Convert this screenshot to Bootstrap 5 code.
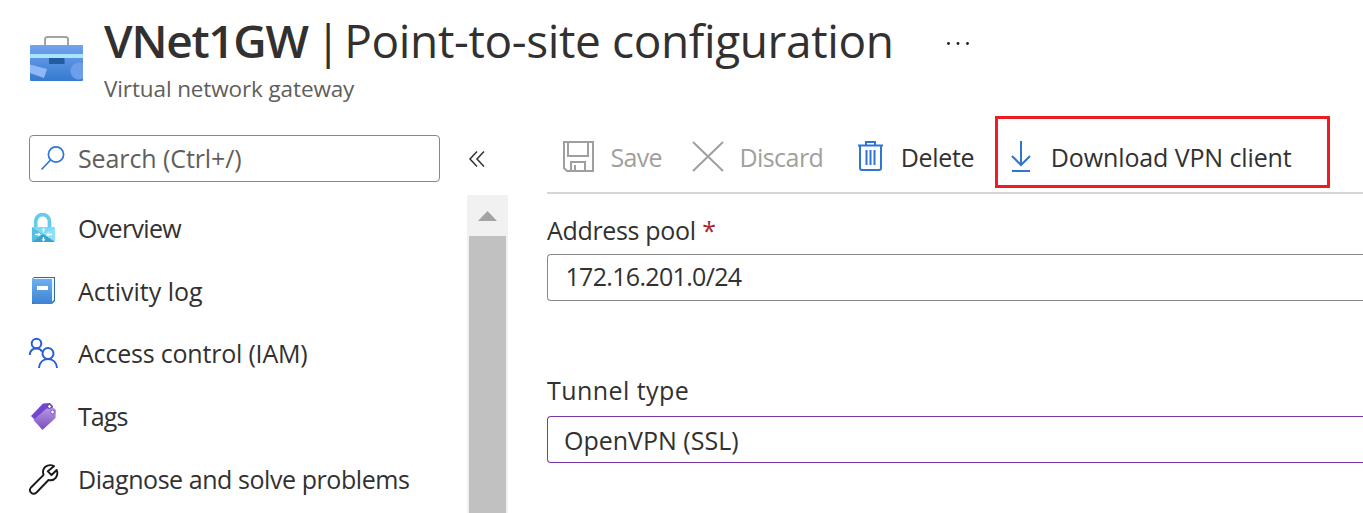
<!DOCTYPE html>
<html lang="en">
<head>
<meta charset="utf-8">
<meta name="viewport" content="width=device-width, initial-scale=1">
<title>VNet1GW | Point-to-site configuration</title>
<link href="https://cdn.jsdelivr.net/npm/bootstrap@5.3.0/dist/css/bootstrap.min.css" rel="stylesheet">
<style>
body{font-family:"Open Sans","Noto Sans",sans-serif;font-size:25px;line-height:34px;color:#323130;background:#fff;height:513px;overflow:hidden;white-space:nowrap}
svg{display:block;flex:none}
.page-head{height:116px;padding:0 29px}
.gateway-icon{margin-top:35px;margin-right:20px}
.page-title{font-size:46px;line-height:60px;margin:10px 0 0;font-weight:400;color:#323130;letter-spacing:-.37px}
.page-title b{font-weight:600;letter-spacing:-1.27px}
.title-bar{letter-spacing:-4.2px}
.title-more{margin:37px 0 0 52px}
.page-sub{font-size:22.5px;line-height:30px;margin-top:4px;color:#605e5c;letter-spacing:-.12px}
.side{width:411px;margin-left:29px;padding-top:19px}
.search-box{height:47px;border:1px solid #8a8886;border-radius:4px;color:#605e5c;letter-spacing:-.1px}
.search-box span{margin-bottom:2px}
.side-list{padding-top:14.5px}
.side-item{height:62.7px}
.item-icon{width:28px;margin-right:21px}
.rail{width:41px;margin-left:27px}
.rail-top{height:79px}
.scroll-track{background:#f1f1f1;width:41px}
.scroll-thumb{background:#c1c1c1;width:37px;margin-left:2px}
.content-pane{margin-left:39px}
.toolbar{height:78px;border-bottom:2px solid #d6d6d6}
.cmd{height:84px}
.cmd span,.boxed-cmd span{margin-bottom:2px}
.cmd-off{color:#a19f9d}
.boxed-cmd{width:335px;height:72px;border:3px solid #ed1c24;margin-left:21px;padding-top:12px}
.field-label{height:34px}
.pool-label{margin-top:19px}
.tunnel-label{margin-top:72px}
.field-box{height:47px;border:1px solid #8a8886;border-right:0;border-radius:4px 0 0 4px}
.pool-box{margin-top:7px;padding:0 0 4px 17.5px}
.tunnel-box{margin-top:9px;padding-left:16px;border-color:#7c37a3}
.req{color:#a4262c}
.ls-1{letter-spacing:-.12px}
.ls-2{letter-spacing:-.2px}
.ls-3{letter-spacing:-.33px}
.ls-4{letter-spacing:-.44px}
.ls-5{letter-spacing:-.55px}
.ls-6{letter-spacing:-.68px}
.ls-7{letter-spacing:-.9px}
.ls-wide{letter-spacing:.45px}
</style>
</head>
<body class="d-flex flex-column">
<header class="page-head d-flex">
  <svg class="gateway-icon" width="55" height="47" viewBox="0 0 55 47">
    <defs><linearGradient id="gc" x2="0" y2="1"><stop stop-color="#73a3ed"/><stop offset="1" stop-color="#347ad0"/></linearGradient></defs>
    <path d="M16 11V4.500Q16 2 18.500 2H36.500Q39 2 39 4.500V11" fill="none" stroke="#a3a3a3" stroke-width="2"/>
    <rect x="1" y="10" width="53" height="36" rx="1" fill="url(#gc)"/>
    <path d="M1 19h53v4H1z" fill="#a8e5fd"/><path d="M20 23h15.500v6H20z" fill="#225b9f"/>
    <path d="M1 29.500 18 34l-3 9L1 38z" fill="#8fb7f5"/><path d="M54 28.500a8.500 8.500 0 1 0 0 15z" fill="#6c9eea"/>
  </svg>
  <div>
    <h1 class="page-title"><b>VNet1GW</b><span class="title-bar"> | </span>Point-to-site configuration</h1>
    <div class="page-sub">Virtual network gateway</div>
  </div>
  <svg class="title-more" width="24" height="12" viewBox="0 0 24 12" fill="#201f1e"><circle cx="2.500" cy="6.500" r="1.400"/><circle cx="12" cy="6.500" r="1.400"/><circle cx="21.500" cy="6.500" r="1.400"/></svg>
</header>
<div class="d-flex flex-grow-1">
  <nav class="side flex-shrink-0">
    <div class="search-box d-flex align-items-center">
      <svg width="48" height="45" viewBox="0 0 48 45" fill="none" stroke="#2f76d2" stroke-width="1.700"><circle cx="26" cy="18.500" r="7.600"/><path d="M20.500 24 11.500 33.500"/></svg>
      <span>Search (Ctrl+/)</span>
    </div>
    <div class="side-list">
      <div class="side-item d-flex align-items-center"><span class="item-icon">
        <svg width="28" height="30" viewBox="0 0 28 30"><path d="M6.700 16V8.500a6.900 6.900 0 0 1 13.800 0V16" fill="none" stroke="#64cbec" stroke-width="3.700"/><rect x="3" y="14" width="23" height="15" rx="1" fill="#53bfe2"/><path d="M3 14h23L14.500 22z" fill="#7bd9f3"/><path d="M3 29 14.500 21 26 29z" fill="#3aa3cd"/><path d="M26 14v15l-11.500-8z" fill="#8be2f8"/><path d="M14.500 19.500V16M14.500 24v3.500M6 21.500h4.500M23 21.500h-4.500" fill="none" stroke="#fff" stroke-width="1.300"/><path d="M12.500 17.200 14.500 14.800l2 2.400zM12.500 26.300l2 2.400 2-2.400zM9.500 19.500l2.400 2-2.400 2zM19.500 19.500l-2.400 2 2.400 2z" fill="#fff"/></svg></span><span class="ls-6">Overview</span></div>
      <div class="side-item d-flex align-items-center"><span class="item-icon">
        <svg width="28" height="30" viewBox="0 0 28 30"><defs><linearGradient id="gb" x2="0" y2="1"><stop stop-color="#6db0f0"/><stop offset="1" stop-color="#3d82d3"/></linearGradient></defs><path d="M5 1h21v24l-3 3H3V3z" fill="#2d69af"/><path d="M5 2h20v22l-2 2V3H4z" fill="#eaf4fd"/><path d="M3 3h20v25H5q-2 0-2-2z" fill="url(#gb)"/><rect x="8" y="10" width="11" height="4" fill="#fff"/></svg></span><span>Activity log</span></div>
      <div class="side-item d-flex align-items-center"><span class="item-icon">
        <svg width="30" height="32" viewBox="0 0 30 32" fill="none" stroke="#285fd6" stroke-width="2"><circle cx="7.500" cy="6.500" r="4.800"/><circle cx="19" cy="16.500" r="5.500"/><path d="M.8 18C1 13.500 4 11.500 7.500 11.500q4 0 5.500 3M10 31C10.500 25.500 14 22 19 22s8.500 3.500 9 9"/></svg></span><span class="ls-2">Access control (IAM)</span></div>
      <div class="side-item d-flex align-items-center"><span class="item-icon">
        <svg width="28" height="30" viewBox="0 0 28 30"><defs><linearGradient id="gt" x2="0" y2="1"><stop stop-color="#b796e3"/><stop offset="1" stop-color="#7750bd"/></linearGradient></defs><path d="M2 15 14 2.500 21 2l3 3-1 6L8 21z" fill="#7446cf"/><path d="M4.500 19 17.500 7.500 25 7l2 2-.5 8L13.500 29z" fill="url(#gt)"/><circle cx="20.500" cy="5.500" r="1.900" fill="#fff" stroke="#5930aa"/><circle cx="23.500" cy="11" r="1.900" fill="#fff" stroke="#7950bf"/></svg></span><span class="ls-7">Tags</span></div>
      <div class="side-item d-flex align-items-center"><span class="item-icon">
        <svg width="30" height="32" viewBox="0 0 30 32" fill="none" stroke="#1b1a19" stroke-width="1.900" stroke-linejoin="round"><path d="M25 3.200C20.500.7 14.500 3 14 8.500q0 2 .6 3.300L2 24.500c-3 3.500 1.500 8.500 5.500 5L19.500 17c6 1.500 10.500-4 8.200-10L22.500 12l-3.700-3.700z"/></svg></span><span class="ls-4">Diagnose and solve problems</span></div>
    </div>
  </nav>
  <div class="rail d-flex flex-column flex-shrink-0">
    <div class="rail-top"><svg width="41" height="79" viewBox="0 0 41 79" fill="none" stroke="#323130" stroke-width="1.500"><path d="M10 35.500 3 43l7 7.500M17 35.500 10 43l7 7.500"/></svg></div>
    <div class="scroll-track flex-grow-1 d-flex flex-column"><svg width="41" height="41" viewBox="0 0 41 41"><path d="M11 26 20.500 16 30 26z" fill="#a3a3a3"/></svg><div class="scroll-thumb flex-grow-1"></div></div>
  </div>
  <main class="content-pane flex-grow-1">
    <div class="toolbar d-flex align-items-start">
      <div class="cmd cmd-off d-flex align-items-center"><svg width="63.500" height="36" viewBox="0 0 63.500 36" fill="none" stroke="#a19f9d" stroke-width="2"><path d="M17 2H46V31H20L17 28zM21 2v14h20V2M24 31V22h14v9M28 31v-6"/></svg><span class="ls-6">Save</span></div>
      <div class="cmd cmd-off d-flex align-items-center"><svg width="77.500" height="36" viewBox="0 0 77.500 36" fill="none" stroke="#a19f9d" stroke-width="2"><path d="M31 2 61 31M61 2 31 31"/></svg><span class="ls-5">Discard</span></div>
      <div class="cmd d-flex align-items-center"><svg width="77.500" height="36" viewBox="0 0 77.500 36" fill="none" stroke="#2f76d2" stroke-width="2"><path d="M35 5.500H60M43 5V2h9v3M37 5v23q0 2 2 2h17q2 0 2-2V5M43.500 10v15M47.500 10v15M51.500 10v15"/></svg><span class="ls-3">Delete</span></div>
      <div class="boxed-cmd d-flex align-items-center"><svg width="52.500" height="36" viewBox="0 0 52.500 36" fill="none" stroke="#2f76d2" stroke-width="2"><path d="M23 1v24M14 16 23 25 32 16M14 31H32"/></svg><span class="ls-1">Download VPN client</span></div>
    </div>
    <div class="field-label pool-label"><span class="ls-3">Address pool</span> <span class="req">*</span></div>
    <div class="field-box pool-box d-flex align-items-center"><span class="ls-6">172.16.201.0/24</span></div>
    <div class="field-label tunnel-label"><span class="ls-wide">Tunnel type</span></div>
    <div class="field-box tunnel-box d-flex align-items-center">OpenVPN (SSL)</div>
  </main>
</div>
<script src="https://cdn.jsdelivr.net/npm/bootstrap@5.3.0/dist/js/bootstrap.bundle.min.js"></script>
</body>
</html>
